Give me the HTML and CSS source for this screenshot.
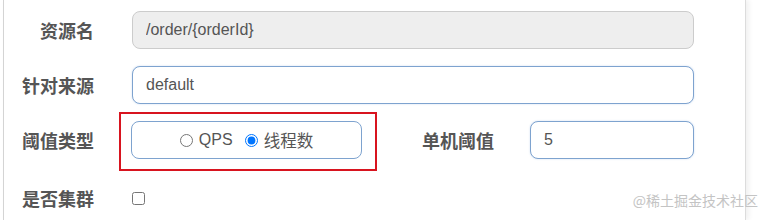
FILE: index.html
```html
<!DOCTYPE html>
<html lang="zh-CN">
<head>
  <meta charset="UTF-8">
  <meta name="viewport" content="width=device-width, initial-scale=1.0">
  <title>新增流控规则</title>
  <link rel="stylesheet" href="styles.css">
</head>
<body>
  <div class="dialog">
    <form class="rule-form">
      <div class="form-row">
        <label class="form-label">资源名</label>
        <input class="form-control" type="text" value="/order/{orderId}" disabled>
      </div>

      <div class="form-row">
        <label class="form-label">针对来源</label>
        <input class="form-control focus" type="text" value="default">
      </div>

      <div class="form-row">
        <label class="form-label">阈值类型</label>
        <div class="field-line">
          <div class="radio-group">
            <label class="radio"><input type="radio" name="grade"> QPS</label>
            <label class="radio"><input type="radio" name="grade" checked> 线程数</label>
            <span class="mark"></span>
          </div>
          <label class="form-label inline">单机阈值</label>
          <input class="form-control focus short" type="text" value="5">
        </div>
      </div>

      <div class="form-row check-row">
        <label class="form-label">是否集群</label>
        <input class="check" type="checkbox">
      </div>
    </form>
  </div>

  <div class="watermark">@稀土掘金技术社区</div>
</body>
</html>
```

FILE: styles.css
```css
html, body {
  margin: 0;
  height: 220px;
  overflow: hidden;
  background: #fff;
}
body {
  font-family: "Liberation Sans", Arial, "Noto Sans CJK SC", sans-serif;
  position: relative;
}
.dialog {
  margin-left: 3px;
  width: 741px;
  height: 220px;
  border-left: 1px solid #d4d4d4;
  border-right: 1px solid #dcdcdc;
  box-shadow: 3px 0 5px rgba(0, 0, 0, 0.06);
}
.rule-form {
  padding-top: 11px;
  display: flex;
  flex-direction: column;
  gap: 17px;
}
.form-row {
  display: flex;
  align-items: center;
  height: 38px;
}
.form-label {
  width: 90px;
  margin-right: 38px;
  text-align: right;
  font-family: "Noto Sans CJK SC", sans-serif;
  font-weight: bold;
  font-size: 18px;
  color: #555;
  flex-shrink: 0;
}
.form-control {
  box-sizing: border-box;
  width: 562px;
  height: 38px;
  padding: 0 13px;
  border: 1px solid #ccc;
  border-radius: 8px;
  font-family: "Liberation Sans", Arial, sans-serif;
  font-size: 16px;
  color: #555;
  background: #fff;
  outline: none;
}
.form-control:disabled {
  background: #eee;
  color: #555;
}
.form-control.focus {
  border-color: #7ea3cf;
  box-shadow: 0 0 2px rgba(102, 150, 210, 0.35);
}
.field-line {
  display: flex;
  align-items: center;
}
.radio-group {
  position: relative;
  box-sizing: border-box;
  width: 231px;
  height: 38px;
  margin-left: -1px;
  border: 1px solid #7ea3cf;
  border-radius: 8px;
  display: flex;
  align-items: center;
  justify-content: center;
  gap: 12px;
}
.radio {
  display: flex;
  align-items: center;
  font-family: "Liberation Sans", Arial, "Noto Sans CJK SC", sans-serif;
  font-size: 16px;
  color: #555;
}
.radio input {
  margin: 0 6px 0 0;
  width: 13px;
  height: 13px;
}
.radio + .radio {
  font-size: 16.5px;
}
.mark {
  position: absolute;
  left: -13px;
  top: -10px;
  right: -16px;
  bottom: -13px;
  border: 2px solid #d8141f;
}
.form-label.inline {
  width: 100px;
  margin-left: 32px;
  margin-right: 36px;
}
.form-control.short {
  width: 164px;
}
.check-row {
  height: 44px;
}
.check {
  margin: 0;
  width: 13px;
  height: 13px;
}
.watermark {
  position: absolute;
  right: 10px;
  bottom: 10px;
  font-family: "Noto Sans CJK SC", sans-serif;
  font-size: 14px;
  color: #c4c4c4;
}
```
